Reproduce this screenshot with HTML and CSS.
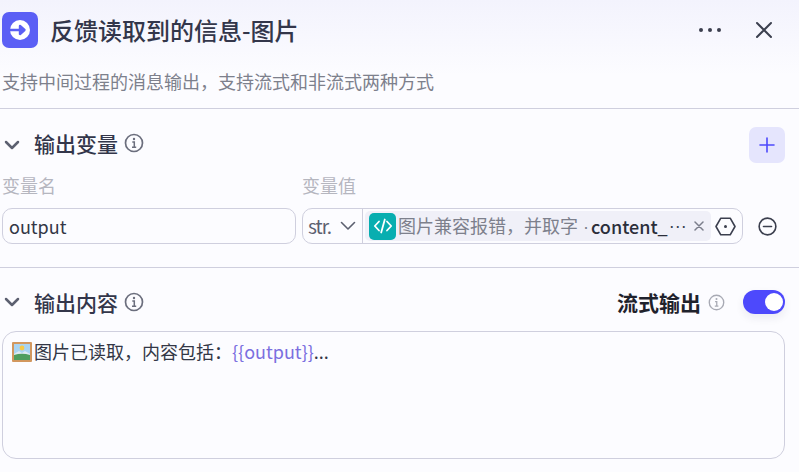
FILE: index.html
```html
<!DOCTYPE html>
<html lang="zh">
<head>
<meta charset="utf-8">
<title>反馈读取到的信息-图片</title>
<link rel="stylesheet" href="styles.css">
</head>
<body>
<div class="panel">
  <header class="top">
    <div class="title-row">
      <span class="node-icon">
        <svg width="36" height="36" viewBox="0 0 36 36"><circle cx="18" cy="18" r="10" fill="#fff"/><path d="M7.500 18H22M18 14l4.500 4-4.500 4z" fill="#5b5ff5" stroke="#5b5ff5" stroke-width="2.400" stroke-linejoin="round"/></svg>
      </span>
      <h1 class="title">反馈读取到的信息-图片</h1>
      <svg class="more" width="24" height="6" viewBox="0 0 24 6"><circle cx="3" cy="3" r="2"/><circle cx="12" cy="3" r="2"/><circle cx="21" cy="3" r="2"/></svg>
      <svg class="close" width="18" height="18" viewBox="0 0 18 18"><path d="M2 2l14 14M16 2L2 16" fill="none" stroke="#3b3f4e" stroke-width="2" stroke-linecap="round"/></svg>
    </div>
    <p class="desc">支持中间过程的消息输出，支持流式和非流式两种方式</p>
  </header>

  <section class="section first">
    <div class="sec-head">
      <svg class="chev" width="16" height="10" viewBox="0 0 16 10"><path d="M2 2l6 6 6-6" fill="none" stroke="#5c6070" stroke-width="2.500" stroke-linecap="round" stroke-linejoin="round"/></svg>
      <h2 class="sec-title">输出变量</h2>
      <svg class="info" width="20" height="20" viewBox="0 0 20 20"><circle cx="10" cy="10" r="8.500" fill="none" stroke="#6b6e7d" stroke-width="1.700"/><circle cx="10" cy="6" r="1.200" fill="#6b6e7d"/><path d="M8.300 9h2v5M8 14.200h4.200" fill="none" stroke="#6b6e7d" stroke-width="1.500"/></svg>
      <span class="spacer"></span>
      <button class="add" type="button"><svg width="16" height="16" viewBox="0 0 16 16"><path d="M8 1v14M1 8h14" stroke="#4d49fc" stroke-width="1.600" stroke-linecap="round"/></svg></button>
    </div>
    <div class="labels">
      <span class="label-name">变量名</span>
      <span class="label-value">变量值</span>
    </div>
    <div class="var-row">
      <div class="name-input">output</div>
      <div class="value-box">
        <div class="type-cell">
          <span class="type">str.</span>
          <svg width="16" height="10" viewBox="0 0 16 10"><path d="M1.500 1.500L8 8l6.500-6.500" fill="none" stroke="#5c6070" stroke-width="1.600" stroke-linecap="round" stroke-linejoin="round"/></svg>
        </div>
        <div class="tag">
          <span class="code-icon"><svg width="20" height="20" viewBox="0 0 20 20"><path d="M6 5.500L1.800 10 6 14.500M14 5.500l4.200 4.500-4.200 4.500M11.800 3.500L8.200 16.500" fill="none" stroke="#fff" stroke-width="1.800" stroke-linecap="round" stroke-linejoin="round"/></svg></span>
          <span class="tag-path">图片兼容报错，并取字<span class="sep">·</span></span>
          <span class="tag-var">content_</span>
          <span class="tag-dots">···</span>
          <svg class="tag-x" width="10" height="10" viewBox="0 0 10 10"><path d="M1 1l8 8M9 1L1 9" stroke="#7b7e8b" stroke-width="1.500" stroke-linecap="round"/></svg>
        </div>
        <svg class="hex" width="21" height="19" viewBox="0 0 21 19"><path d="M5.800 1.200h9.400l4.800 8.300-4.800 8.300H5.800L1 9.500z" fill="none" stroke="#3b3f4e" stroke-width="1.600" stroke-linejoin="round"/><circle cx="10.500" cy="9.500" r="1.500" fill="#3b3f4e"/></svg>
      </div>
      <svg class="minus" width="19" height="19" viewBox="0 0 20 20"><circle cx="10" cy="10" r="8.800" fill="none" stroke="#3b3f4e" stroke-width="1.700"/><path d="M5.800 10h8.400" stroke="#3b3f4e" stroke-width="1.700" stroke-linecap="round"/></svg>
    </div>
  </section>

  <section class="section second">
    <div class="sec-head">
      <svg class="chev" width="16" height="10" viewBox="0 0 16 10"><path d="M2 2l6 6 6-6" fill="none" stroke="#5c6070" stroke-width="2.500" stroke-linecap="round" stroke-linejoin="round"/></svg>
      <h2 class="sec-title">输出内容</h2>
      <svg class="info" width="20" height="20" viewBox="0 0 20 20"><circle cx="10" cy="10" r="8.500" fill="none" stroke="#6b6e7d" stroke-width="1.700"/><circle cx="10" cy="6" r="1.200" fill="#6b6e7d"/><path d="M8.300 9h2v5M8 14.200h4.200" fill="none" stroke="#6b6e7d" stroke-width="1.500"/></svg>
      <span class="spacer"></span>
      <span class="stream">流式输出</span>
      <svg class="info-small" width="17" height="17" viewBox="0 0 20 20"><circle cx="10" cy="10" r="8.500" fill="none" stroke="#a8aab4" stroke-width="1.600"/><circle cx="10" cy="6" r="1.200" fill="#a8aab4"/><path d="M8.300 9h2v5M8 14.200h4.200" fill="none" stroke="#a8aab4" stroke-width="1.500"/></svg>
      <span class="toggle"><span class="knob"></span></span>
    </div>
    <div class="editor">
      <svg class="pic" width="20" height="20" viewBox="0 0 20 20"><rect width="20" height="20" rx="1" fill="#d2975e"/><rect x="2" y="2" width="16" height="16" fill="#a9d4f2"/><circle cx="10" cy="6" r="2.400" fill="#f7c948"/><path d="M2 12l5-3 3 2 3-2 5 3v2H2z" fill="#dfeaf2"/><path d="M2 18v-5q8-2.500 16 0v5z" fill="#4f9e5f"/></svg>
      <span>图片已读取，内容包括：</span><span class="tpl">{{output}}</span><span>...</span>
    </div>
  </section>
</div>
</body>
</html>
```

FILE: styles.css
```css
* { box-sizing: border-box; }
html, body { margin: 0; height: 100%; }
body {
  font-family: "Noto Sans CJK SC", "Noto Sans", sans-serif;
  background: linear-gradient(180deg, #f3f3fd 0, #fcfcff 75px, #fcfcff 100%);
  color: #2b2e3a;
  overflow: hidden;
}
.panel { width: 799px; height: 472px; }

.top { height: 109px; padding: 12px 26px 0 2px; border-bottom: 1px solid #cfcfde; }
.title-row { display: flex; align-items: center; height: 36px; }
.node-icon {
  width: 36px; height: 36px; border-radius: 7px; background: #5b5ff5;
  display: flex; flex: none;
}
.title { margin: 0 0 0 12px; font-size: 24px; line-height: 36px; font-weight: 500; color: #33364a; flex: 1; }
.more { fill: #3b3f4e; margin-right: 33px; }
.desc { margin: 20px 0 0; font-size: 18px; line-height: 26px; color: #7d808c; }

.section { padding: 18px 14px 0 2px; }
.first { height: 159px; border-bottom: 1px solid #cfcfde; }
.second { padding-top: 16px; }

.sec-head { display: flex; align-items: center; height: 36px; }
.chev { margin-left: 2px; flex: none; }
.sec-title { margin: 0 0 0 14px; font-size: 21px; line-height: 36px; font-weight: 500; color: #33364a; }
.first .sec-title, .first .info { margin-bottom: 4px; }
.info { margin-left: 6px; }
.spacer { flex: 1; }
.add {
  width: 36px; height: 36px; padding: 0; border: 0; border-radius: 7px; background: #e5e5fd;
  display: flex; align-items: center; justify-content: center;
}

.labels { display: flex; height: 26px; margin-top: 9px; font-size: 18px; line-height: 26px; color: #b5b6bf; }
.label-name { width: 300px; }

.var-row { display: flex; align-items: center; margin-top: 10px; height: 36px; }
.name-input {
  width: 294px; height: 36px; padding: 0 6px; border: 1px solid #cfcfde; border-radius: 10px;
  font-size: 18px; line-height: 34px; color: #333746;
}
.value-box {
  width: 441px; height: 36px; margin-left: 6px; border: 1px solid #cfcfde; border-radius: 10px;
  display: flex; align-items: center;
}
.type-cell {
  width: 60px; height: 34px; padding: 0 0 0 5px; border-right: 1px solid #cfcfde;
  display: flex; align-items: center; gap: 9px; flex: none;
}
.type { font-size: 19px; line-height: 34px; color: #5c6070; letter-spacing: -1px; }
.tag {
  width: 346px; height: 30px; margin-left: 2px; padding: 0 7px 0 4px; border-radius: 5px; background: #f0f0f8;
  display: flex; align-items: center; flex: none;
}
.code-icon {
  width: 27px; height: 27px; border-radius: 5px; background: #08aeb0; flex: none;
  display: flex; align-items: center; justify-content: center;
}
.tag-path { margin-left: 2px; font-size: 18px; line-height: 26px; color: #7d808c; white-space: nowrap; }
.sep { margin-left: 5px; font-family: "Liberation Sans", sans-serif; }
.tag-var { margin-left: 2px; font-size: 18px; line-height: 26px; font-weight: 500; color: #2b2e3a; }
.tag-dots { margin-left: 1px; font-family: "Liberation Sans", sans-serif; font-size: 18px; line-height: 26px; font-weight: 400; color: #3b3f4e; flex: 1; }
.tag-x { flex: none; }
.hex { margin-left: 4px; flex: none; }
.minus { margin-left: 15px; flex: none; }

.stream { font-size: 21px; line-height: 30px; font-weight: 700; color: #1f222c; }
.info-small { margin-left: 7px; }
.toggle {
  width: 42px; height: 24px; margin-left: 18px; border-radius: 12px; background: #4d49fc; padding: 3px 2px 3px 3px;
  display: flex; justify-content: flex-end; box-shadow: 0 4px 8px rgba(40, 40, 80, 0.08);
}
.knob { width: 18px; height: 18px; border-radius: 50%; background: #fff; }

.editor {
  width: 783px; height: 128px; margin-top: 11px; padding: 6px 9px; border: 1px solid #cfcfde; border-radius: 14px;
  display: flex; align-items: flex-start; font-size: 18px; line-height: 26px; color: #333746;
}
.pic { margin: 4px 2px 0 0; flex: none; }
.tpl { color: #7b6fe0; }
```
